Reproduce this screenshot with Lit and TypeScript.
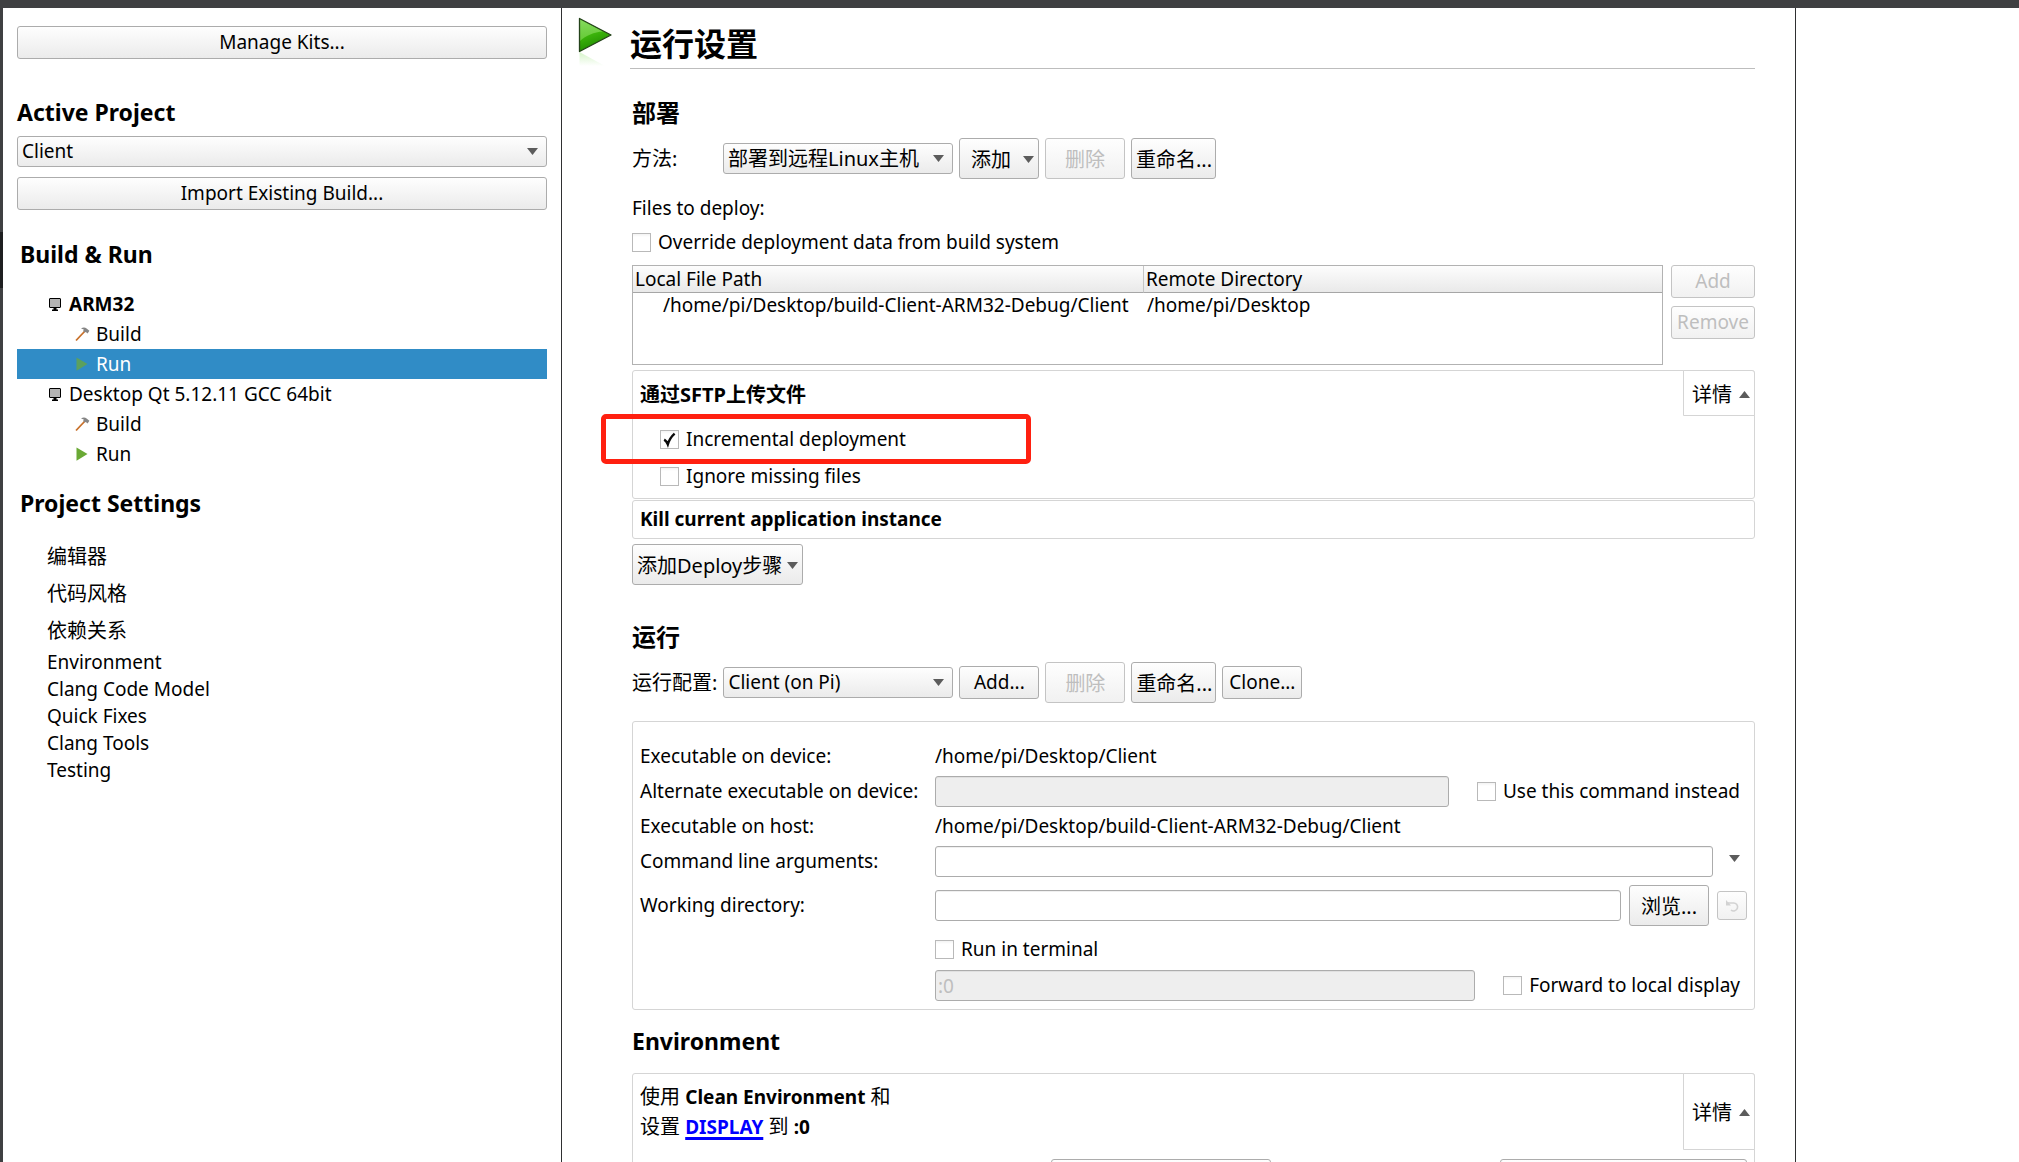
import { LitElement, html, css, svg } from "lit";
import { customElement, property } from "lit/decorators.js";

const shared = css`
  * { box-sizing: border-box; }
  button, select, input { font: inherit; color: inherit; margin: 0; }
  .cjk { font-size: 20px; }
  button {
    height: 33px;
    padding: 0 4px;
    border: 1px solid #acacac;
    border-radius: 3px;
    background: linear-gradient(#fefefe, #ebebeb);
    white-space: nowrap;
  }
  button:disabled { color: #bebebe; border-color: #c4c4c4; background: linear-gradient(#fefefe, #f1f1f1); }
  .arrow { display: block; flex: none; width: 11px; height: 7px; fill: #5c5c5c; }
`;

const down = html`<svg class="arrow" viewBox="0 0 11 7" aria-hidden="true"><path d="M0 0H11L5.5 7Z" /></svg>`;
const up = html`<svg class="arrow" viewBox="0 0 11 7" aria-hidden="true"><path d="M0 7H11L5.5 0Z" /></svg>`;

const glyphs = {
  monitor: svg`<rect x="1.5" y="1.5" width="11" height="9" rx="0.5" fill="#b4b4b4" stroke="#000"/><path d="M5.5 10.5h3v2h1.500v1.500h-6v-1.500h1.500z" fill="#000"/>`,
  hammer: svg`<path d="M1 13.5L10 4" stroke="#c8702a" stroke-width="1.8"/><path d="M6 1.600C8 .2 10 .2 11.6 1.600L14.4 3.8L12.6 6.4L10.8 5L9.6 5.4L8.2 4L8.8 2.4Z" fill="#868686"/>`,
  run: svg`<path d="M1.5 0.5L12.5 7L1.5 13.8Z" fill="#6aa935"/>`,
  runActive: svg`<path d="M1.5 0.5L12.5 7L1.5 13.8Z" fill="#5ba05f"/>`,
};

@customElement("qt-combo")
class QtCombo extends LitElement {
  @property() value = "";
  @property() label = "";
  @property() size = "";
  static styles = [shared, css`
    :host { display: grid; align-items: center; }
    select {
      grid-area: 1 / 1;
      width: 100%;
      height: 31px;
      appearance: none;
      border: 1px solid #acacac;
      border-radius: 3px;
      padding: 0 24px 0 4px;
      background: linear-gradient(#fefefe, #ebebeb);
    }
    .arrow { grid-area: 1 / 1; justify-self: end; margin-right: 9px; pointer-events: none; }
  `];
  render() {
    return html`<select class=${this.size} aria-label=${this.label}><option>${this.value}</option></select>${down}`;
  }
}

@customElement("qt-check")
class QtCheck extends LitElement {
  @property() label = "";
  @property({ type: Boolean }) checked = false;
  static styles = [shared, css`
    :host { display: block; }
    label { display: flex; align-items: center; gap: 7px; height: 27px; white-space: nowrap; }
    .box { display: grid; width: 19px; height: 19px; }
    input {
      grid-area: 1 / 1;
      appearance: none;
      width: 19px;
      height: 19px;
      border: 1px solid #b9b9b9;
      background: linear-gradient(#f3f3f3, #fff 3px);
    }
    svg { grid-area: 1 / 1; width: 19px; height: 19px; pointer-events: none; }
  `];
  render() {
    return html`<label>
      <span class="box">
        <input type="checkbox" .checked=${this.checked} />
        ${this.checked
          ? html`<svg viewBox="0 0 19 19" aria-hidden="true"><path d="M4.2 9.6C5.6 10.4 6.8 12 7.8 14.4C9 10.4 11.4 6.4 14.6 3.6" fill="none" stroke="#0a0a0a" stroke-width="2.4"/></svg>`
          : ""}
      </span>${this.label}</label>`;
  }
}

@customElement("project-sidebar")
class ProjectSidebar extends LitElement {
  static styles = [shared, css`
    :host { display: block; padding: 18px 14px 0; border-right: 1px solid #2f3032; }
    .wide { display: block; width: 100%; }
    h2 { margin: 0; font-size: 23px; line-height: 32px; font-weight: 700; }
    .first { margin: 37px 0 8px; }
    .first + qt-combo { margin-bottom: 10px; }
    .title { padding-left: 3px; }
    .build { margin-top: 28px; }
    .settings { margin-top: 18px; }
    ul { list-style: none; margin: 0; padding: 0; }
    .tree { margin-top: 19px; }
    .tree li { display: flex; align-items: center; gap: 6px; height: 30px; padding-left: 58px; }
    .tree .kit { padding-left: 31px; }
    .tree .active { background: #308cc6; color: #fff; }
    .tree svg { width: 15px; height: 15px; }
    .bold { font-weight: 700; }
    .pages { margin-top: 19px; padding-left: 30px; }
    .pages li { line-height: 27px; }
    .pages .cjk { line-height: 37px; }
  `];
  private item(icon: unknown, text: string, cls = "") {
    return html`<li class=${cls}><svg viewBox="0 0 15 15" aria-hidden="true">${icon}</svg>${text}</li>`;
  }
  render() {
    return html`
      <button class="wide">Manage Kits...</button>
      <h2 class="first">Active Project</h2>
      <qt-combo value="Client" label="Active Project"></qt-combo>
      <button class="wide">Import Existing Build...</button>
      <h2 class="title build">Build &amp; Run</h2>
      <ul class="tree">
        ${this.item(glyphs.monitor, "ARM32", "kit bold")}
        ${this.item(glyphs.hammer, "Build")}
        ${this.item(glyphs.runActive, "Run", "active")}
        ${this.item(glyphs.monitor, "Desktop Qt 5.12.11 GCC 64bit", "kit")}
        ${this.item(glyphs.hammer, "Build")}
        ${this.item(glyphs.run, "Run")}
      </ul>
      <h2 class="title settings">Project Settings</h2>
      <ul class="pages">
        ${["编辑器", "代码风格", "依赖关系"].map((t) => html`<li class="cjk">${t}</li>`)}
        ${["Environment", "Clang Code Model", "Quick Fixes", "Clang Tools", "Testing"].map((t) => html`<li>${t}</li>`)}
      </ul>
    `;
  }
}

@customElement("run-settings")
class RunSettings extends LitElement {
  static styles = [shared, css`
    :host { display: block; padding: 0 40px 0 16px; border-right: 1px solid #2f3032; overflow: hidden; }
    header { display: flex; height: 61px; padding-top: 8px; }
    .play { flex: none; width: 36px; height: 52px; margin-right: 16px; }
    h1 { flex: 1; margin: 0; padding-top: 5px; font-size: 32px; line-height: 46px; font-weight: 700; border-bottom: 1px solid #bdbdbd; }
    .body { padding-left: 54px; }
    h2 { margin: 0; font-size: 24px; line-height: 32px; font-weight: 700; }
    .deploy { margin-top: 28px; }
    .run { margin-top: 36px; }
    .env { margin-top: 15px; font-size: 23px; }
    .bar { display: flex; align-items: center; gap: 6px; height: 41px; margin-top: 9px; }
    .bar .name { flex: 0 0 85px; white-space: nowrap; }
    .bar qt-combo { flex: 0 0 230px; }
    .bar button { width: 80px; }
    button.cjk { height: 41px; padding-top: 2px; }
    .bar .rename { width: 85px; }
    .bar .menu { padding-left: 11px; }
    .menu { display: inline-flex; align-items: center; justify-content: space-between; }
    .files { margin: 16px 0 7px; line-height: 27px; }
    .deployment { display: grid; grid-template-columns: 1fr 84px; gap: 8px; margin: 9px 0 5px; }
    .list { height: 100px; border: 1px solid #b2b2b2; overflow: hidden; }
    table { width: 100%; border-collapse: separate; border-spacing: 0; table-layout: fixed; }
    th { height: 27px; padding: 0 2px; line-height: 26px; text-align: left; font-weight: 400; background: linear-gradient(#fdfdfd, #e9e9e9); border-bottom: 1px solid #a6a6a6; }
    th:first-child { width: 511px; border-right: 1px solid #c6c6c6; }
    td { padding: 0 3px; line-height: 24px; white-space: nowrap; }
    td:first-child { padding: 0 0 0 30px; }
    .stack { display: flex; flex-direction: column; gap: 8px; }
    .panel { border: 1px solid #d5d5d5; border-radius: 3px; }
    .sftp { height: 129px; }
    .head { display: flex; justify-content: space-between; }
    .head .text { padding-left: 7px; }
    .head button.details { display: flex; align-items: center; gap: 7px; width: 72px; height: 46px; padding: 2px 5px 0 8px; margin: -1px -1px 0 0; border: 1px solid #d5d5d5; border-radius: 0 3px 0 0; background: #fff; }
    .sftp .text { font-weight: 700; line-height: 48px; }
    .option { position: relative; margin-left: 27px; }
    .mark { position: absolute; left: -59px; top: -12px; width: 430px; height: 50px; border: 5px solid #ff2010; border-radius: 5px; pointer-events: none; }
    .option + .option { margin-top: 10px; }
    .options { margin-top: 7px; }
    .kill { margin: 1px 0 5px; padding-left: 7px; font-weight: 700; line-height: 37px; }
    .form { display: grid; grid-template-columns: 288px 1fr; grid-template-rows: 27px 31px 27px 31px 45px 30px 31px; gap: 6px; align-items: center; margin-top: 18px; padding: 21px 7px 8px 7px; }
    .form > :nth-child(even) { margin-left: 1px; }
    .form label, .form .cell { white-space: nowrap; }
    .form .wide { display: flex; align-items: center; gap: 8px; }
    .step { width: 171px; }
    input { flex: 1; min-width: 0; width: 100%; height: 31px; border: 1px solid #acacac; border-radius: 3px; padding: 0 2px; background: #fff; box-shadow: inset 0 1px #f0f0f0; }
    input:disabled { background: #eee; color: #bebebe; box-shadow: inset 0 1px #e0e0e0; }
    .form qt-check.side { padding: 0 7px 0 20px; }
    .form .browse { width: 80px; }
    .form .reset { display: grid; place-items: center; width: 30px; height: 29px; padding: 0; }
    .form .drop { display: grid; place-items: center; width: 26px; height: 31px; padding: 0 0 7px; border: 0; background: none; }
    .envpanel { margin-top: 16px; height: 200px; }
    .envpanel .text { padding-top: 8px; line-height: 30px; }
    .latin { font-size: 19px; }
    a { color: #0000ff; font-weight: 700; text-decoration-thickness: 3px; text-underline-offset: 3px; }
    .envpanel .head button.details { height: 77px; }
    .actions { display: flex; justify-content: space-between; padding: 9px 7px 0 418px; }
    .actions .fetch { width: 220px; }
    .actions .edit { width: 247px; }
  `];
  render() {
    return html`
      <header>
        <svg class="play" viewBox="0 0 36 52" aria-hidden="true">
          <defs>
            <linearGradient id="body" x1="0" y1="0" x2="0.3" y2="1"><stop offset="0" stop-color="#5fd62a"/><stop offset="0.5" stop-color="#3fb80c"/><stop offset="1" stop-color="#1f8a00"/></linearGradient>
            <linearGradient id="shine" x1="0" y1="0" x2="0" y2="1"><stop offset="0" stop-color="#8fdc6c"/><stop offset="1" stop-color="#6fd03f"/></linearGradient>
            <linearGradient id="fade" x1="0" y1="0" x2="0" y2="1"><stop offset="0" stop-color="#c4efb2"/><stop offset="1" stop-color="#fff"/></linearGradient>
          </defs>
          <path d="M1.5 36L27 50H1.5Z" fill="url(#fade)" opacity="0.7"/>
          <path d="M1.5 2.5L33 19L1.5 35.5Z" fill="url(#body)"/>
          <path d="M2 3.5L25 15.5C16 16 8 19.5 2 25Z" fill="url(#shine)" opacity="0.8"/>
          <path d="M1.5 2.5L33 19L1.5 35.5Z" fill="none" stroke="#24421a" stroke-width="1.3" stroke-linejoin="round"/>
        </svg>
        <h1>运行设置</h1>
      </header>
      <div class="body">
        <h2 class="deploy">部署</h2>
        <div class="bar">
          <span class="name cjk">方法:</span>
          <qt-combo value="部署到远程Linux主机" label="方法" size="cjk"></qt-combo>
          <button class="cjk menu">添加${down}</button>
          <button class="cjk" disabled>删除</button>
          <button class="cjk rename">重命名...</button>
        </div>
        <div class="files">Files to deploy:</div>
        <qt-check label="Override deployment data from build system"></qt-check>
        <div class="deployment">
          <div class="list">
            <table>
              <thead><tr><th>Local File Path</th><th>Remote Directory</th></tr></thead>
              <tbody><tr><td>/home/pi/Desktop/build-Client-ARM32-Debug/Client</td><td>/home/pi/Desktop</td></tr></tbody>
            </table>
          </div>
          <div class="stack"><button disabled>Add</button><button disabled>Remove</button></div>
        </div>
        <section class="panel sftp">
          <div class="head"><span class="text cjk">通过SFTP上传文件</span><button class="cjk details">详情${up}</button></div>
          <div class="options">
            <div class="option"><qt-check label="Incremental deployment" checked></qt-check><div class="mark"></div></div>
            <div class="option"><qt-check label="Ignore missing files"></qt-check></div>
          </div>
        </section>
        <section class="panel kill">Kill current application instance</section>
        <button class="cjk menu step">添加Deploy步骤${down}</button>

        <h2 class="run">运行</h2>
        <div class="bar">
          <span class="name cjk">运行配置:</span>
          <qt-combo value="Client (on Pi)" label="运行配置"></qt-combo>
          <button>Add...</button>
          <button class="cjk" disabled>删除</button>
          <button class="cjk rename">重命名...</button>
          <button>Clone...</button>
        </div>
        <section class="panel form">
          <span class="cell">Executable on device:</span><span class="cell">/home/pi/Desktop/Client</span>
          <label for="alt">Alternate executable on device:</label>
          <div class="wide"><input id="alt" disabled /><qt-check class="side" label="Use this command instead"></qt-check></div>
          <span class="cell">Executable on host:</span><span class="cell">/home/pi/Desktop/build-Client-ARM32-Debug/Client</span>
          <label for="args">Command line arguments:</label>
          <div class="wide"><input id="args" /><button class="drop" aria-label="Expand arguments">${down}</button></div>
          <label for="dir">Working directory:</label>
          <div class="wide">
            <input id="dir" /><button class="cjk browse">浏览...</button>
            <button class="reset" disabled aria-label="Reset">
              <svg width="14" height="14" viewBox="0 0 14 14" aria-hidden="true"><path d="M3 4H8A4 4 0 1 1 6 11" fill="none" stroke="#d2d2d2" stroke-width="1.6"/><path d="M1 1V6.5H6Z" fill="#d2d2d2"/></svg>
            </button>
          </div>
          <span></span><qt-check label="Run in terminal"></qt-check>
          <span></span>
          <div class="wide"><input value=":0" aria-label="Display" disabled /><qt-check class="side" label="Forward to local display"></qt-check></div>
        </section>

        <h2 class="env">Environment</h2>
        <section class="panel envpanel">
          <div class="head">
            <div class="text cjk">
              <div>使用 <b class="latin">Clean Environment</b> 和</div>
              <div>设置 <a class="latin" href="#display">DISPLAY</a> 到 <b class="latin">:0</b></div>
            </div>
            <button class="cjk details">详情${up}</button>
          </div>
          <div class="actions"><button class="fetch" aria-label="Variables"></button><button class="edit" aria-label="Edit"></button></div>
        </section>
      </div>
    `;
  }
}

@customElement("app-root")
class AppRoot extends LitElement {
  static styles = [shared, css`
    :host {
      display: grid;
      grid-template: 8px 1fr / 3px 559px 1fr 223px;
      height: 100vh;
      overflow: hidden;
      background: #fff;
      color: #000;
      font: 19px/27px "Noto Sans", "Noto Sans CJK SC", sans-serif;
    }
    .top { grid-column: 1 / -1; background: #3f4042; }
    .edge { background: linear-gradient(#3f4042 224px, #1e1f20 224px, #1e1f20 280px, #3f4042 280px); }
    run-settings { min-height: 0; }
  `];
  render() {
    return html`
      <div class="top"></div>
      <div class="edge"></div>
      <project-sidebar></project-sidebar>
      <run-settings></run-settings>
    `;
  }
}
